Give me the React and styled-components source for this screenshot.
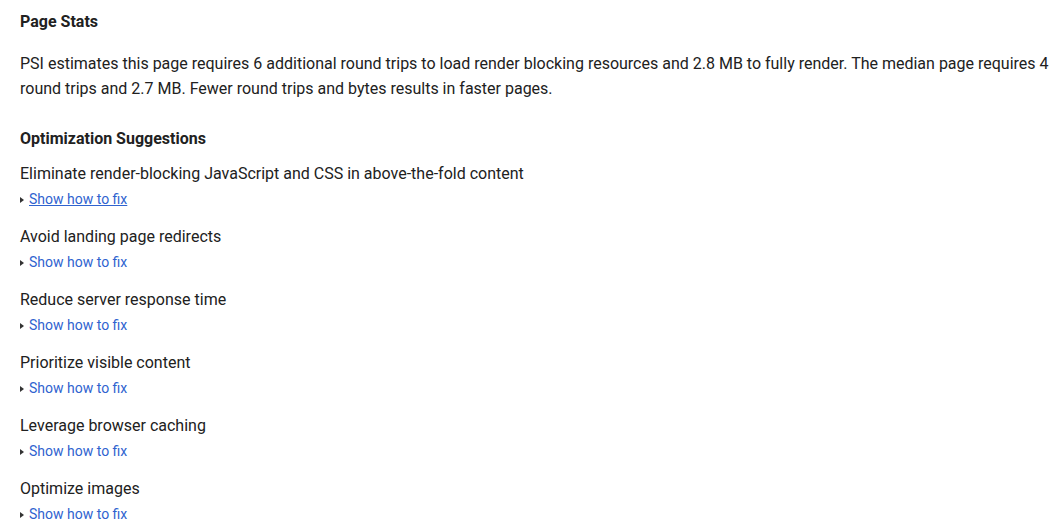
import React from "react";
import styled, { createGlobalStyle } from "styled-components";

const Global = createGlobalStyle`
  html, body { margin: 0; padding: 0; background: #fff; }
  body { font-family: Roboto, "Noto Sans", Arial, sans-serif; color: #212121; }
`;

const Page = styled.div`
  padding: 13px 0 0 20px;
  width: 1056px;
  box-sizing: border-box;
`;

const Heading = styled.h3`
  margin: 0;
  font-size: 16px;
  font-weight: 700;
  line-height: 18px;
  color: #212121;
`;

const Para = styled.p`
  margin: 20px 0 29px 0;
  font-size: 16px;
  line-height: 25px;
  color: #212121;
`;

const List = styled.div`
  display: flex;
  flex-direction: column;
  gap: 13px;
  margin-top: 14px;
`;

const Item = styled.div`
  display: flex;
  flex-direction: column;
`;

const Title = styled.div`
  font-size: 16px;
  line-height: 24px;
  color: #212121;
`;

const FixRow = styled.div`
  display: flex;
  align-items: center;
  font-size: 14px;
  line-height: 26px;
  height: 26px;
`;

const Arrow = styled.span`
  display: inline-block;
  width: 0;
  height: 0;
  border-top: 3.5px solid transparent;
  border-bottom: 3.5px solid transparent;
  border-left: 4px solid #333;
  margin: 1px 5px 0 0;
`;

const FixLink = styled.a`
  color: #2f63cf;
  text-decoration: ${(p) => (p.$active ? "underline" : "none")};
  cursor: pointer;
`;

const items = [
  "Eliminate render-blocking JavaScript and CSS in above-the-fold content",
  "Avoid landing page redirects",
  "Reduce server response time",
  "Prioritize visible content",
  "Leverage browser caching",
  "Optimize images",
];

export default function App() {
  return (
    <Page>
      <Global />
      <Heading>Page Stats</Heading>
      <Para>
        PSI estimates this page requires 6 additional round trips to load render blocking resources and 2.8 MB to fully render. The median page requires 4 round trips and 2.7 MB. Fewer round trips and bytes results in faster pages.
      </Para>
      <Heading>Optimization Suggestions</Heading>
      <List>
        {items.map((t, i) => (
          <Item key={t}>
            <Title>{t}</Title>
            <FixRow>
              <Arrow />
              <FixLink $active={i === 0}>Show how to fix</FixLink>
            </FixRow>
          </Item>
        ))}
      </List>
    </Page>
  );
}
